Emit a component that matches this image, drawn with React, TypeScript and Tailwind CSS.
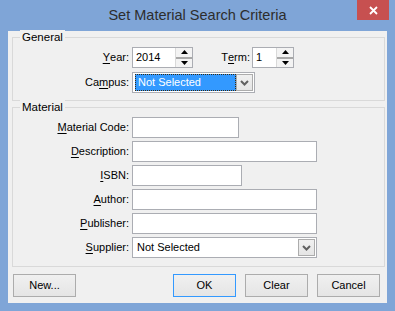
import React from "react";

const font = "font-['Liberation_Sans',Arial,sans-serif]";

function Key({ text, k }: { text: string; k: number }) {
  return (
    <>
      {text.slice(0, k)}
      <span className="underline underline-offset-[2px]">{text[k]}</span>
      {text.slice(k + 1)}
    </>
  );
}

function Arrow({ up }: { up?: boolean }) {
  return (
    <svg width="7" height="4" viewBox="0 0 7 4" aria-hidden>
      <path d={up ? "M0 4L3.5 0L7 4Z" : "M0 0L3.5 4L7 0Z"} fill="#000" />
    </svg>
  );
}

function Chevron() {
  return (
    <svg width="9" height="6" viewBox="0 0 9 6" aria-hidden>
      <path d="M1 1L4.5 4.5L8 1" fill="none" stroke="#606060" strokeWidth="2" />
    </svg>
  );
}

function Spin({ value, w }: { value: string; w: string }) {
  return (
    <div className={`flex h-[21px] border border-[#abadb3] bg-white ${w}`}>
      <div className="flex flex-1 items-center pl-[3px] text-[11px] text-black">{value}</div>
      <div className="flex w-[17px] flex-col border-l border-[#d9d9d9] bg-[#f3f3f3]">
        <div className="flex flex-1 items-center justify-center">
          <Arrow up />
        </div>
        <div className="h-[2px] bg-[#a8a8a8]" />
        <div className="flex flex-1 items-center justify-center">
          <Arrow />
        </div>
      </div>
    </div>
  );
}

function DropBtn() {
  return (
    <div className="flex h-[17px] w-[17px] items-center justify-center border border-[#acacac] bg-gradient-to-b from-[#f0f0f0] to-[#e5e5e5]">
      <Chevron />
    </div>
  );
}

function TextBox({ w }: { w: string }) {
  return <div className={`h-[21px] border border-[#abadb3] bg-white ${w}`} />;
}

function Label({ children }: { children: React.ReactNode }) {
  return <div className="flex h-[21px] items-center justify-end text-[11px] text-black">{children}</div>;
}

function Btn({ label, def }: { label: string; def?: boolean }) {
  return (
    <div
      className={`flex h-[23px] w-[63px] items-center justify-center border bg-gradient-to-b from-[#f0f0f0] to-[#e5e5e5] text-[11px] text-black ${
        def ? "border-[#3399ff]" : "border-[#acacac]"
      }`}
    >
      {label}
    </div>
  );
}

export default function App() {
  return (
    <div className={`flex h-[311px] w-[395px] flex-col bg-[#7fa5d7] ${font}`}>
      {/* title bar */}
      <div className="relative flex h-[31px] items-center justify-center">
        <span className="text-[14.5px] text-[#2d2d2d]">Set Material Search Criteria</span>
        <div className="absolute right-[6px] top-0 flex h-[20px] w-[32px] items-center justify-center bg-[#c75050]">
          <svg width="9" height="9" viewBox="0 0 9 9" aria-hidden>
            <path d="M1 1L8 8M8 1L1 8" stroke="#fff" strokeWidth="1.8" />
          </svg>
        </div>
      </div>

      {/* client */}
      <div className="mx-[8px] flex h-[272px] w-[379px] flex-col bg-[#f0f0f0]">
        {/* General */}
        <div className="relative ml-[4px] mt-[6px] h-[64px] w-[373px] border border-[#d9d9d9] pt-[9px]">
          <span className="absolute left-[7px] top-[-8px] bg-[#f0f0f0] px-[2px] text-[11.5px] leading-[14px] text-black">
            General
          </span>
          <div className="grid grid-cols-[116px_auto] gap-x-[3px] gap-y-[4px]">
            <Label>
              <Key text="Year:" k={0} />
            </Label>
            <div className="flex">
              <Spin value="2014" w="w-[61px]" />
              <div className="w-[57px]">
                <Label>
                  <Key text="Term:" k={1} />
                </Label>
              </div>
              <div className="ml-[2px]">
                <Spin value="1" w="w-[42px]" />
              </div>
            </div>
            <Label>
              <Key text="Campus:" k={2} />
            </Label>
            <div className="flex h-[21px] w-[123px] items-center border border-[#abadb3] bg-white pl-[2px] pr-[1px]">
              <div className="flex h-[17px] flex-1 items-center border border-dotted border-[#3a2a10] bg-[#3399ff] pl-[2px] text-[11px] text-white">
                Not Selected
              </div>
              <DropBtn />
            </div>
          </div>
        </div>

        {/* Material */}
        <div className="relative ml-[4px] mt-[6px] h-[160px] w-[373px] border border-[#d9d9d9] pt-[9px]">
          <span className="absolute left-[7px] top-[-8px] bg-[#f0f0f0] px-[2px] text-[11.5px] leading-[14px] text-black">
            Material
          </span>
          <div className="grid grid-cols-[116px_auto] gap-x-[3px] gap-y-[3px]">
            <Label>
              <Key text="Material Code:" k={0} />
            </Label>
            <TextBox w="w-[107px]" />
            <Label>
              <Key text="Description:" k={0} />
            </Label>
            <TextBox w="w-[185px]" />
            <Label>
              <Key text="ISBN:" k={0} />
            </Label>
            <TextBox w="w-[110px]" />
            <Label>
              <Key text="Author:" k={0} />
            </Label>
            <TextBox w="w-[185px]" />
            <Label>
              <Key text="Publisher:" k={0} />
            </Label>
            <TextBox w="w-[185px]" />
            <Label>
              <Key text="Supplier:" k={0} />
            </Label>
            <div className="flex h-[21px] w-[185px] items-center border border-[#abadb3] bg-white pl-[4px] pr-[1px]">
              <div className="flex-1 text-[11px] text-black">Not Selected</div>
              <DropBtn />
            </div>
          </div>
        </div>

        {/* buttons */}
        <div className="mt-[7px] flex pl-[5px]">
          <Btn label="New..." />
          <div className="ml-auto mr-[7px] flex gap-[9px]">
            <Btn label="OK" def />
            <Btn label="Clear" />
            <Btn label="Cancel" />
          </div>
        </div>
      </div>
    </div>
  );
}
